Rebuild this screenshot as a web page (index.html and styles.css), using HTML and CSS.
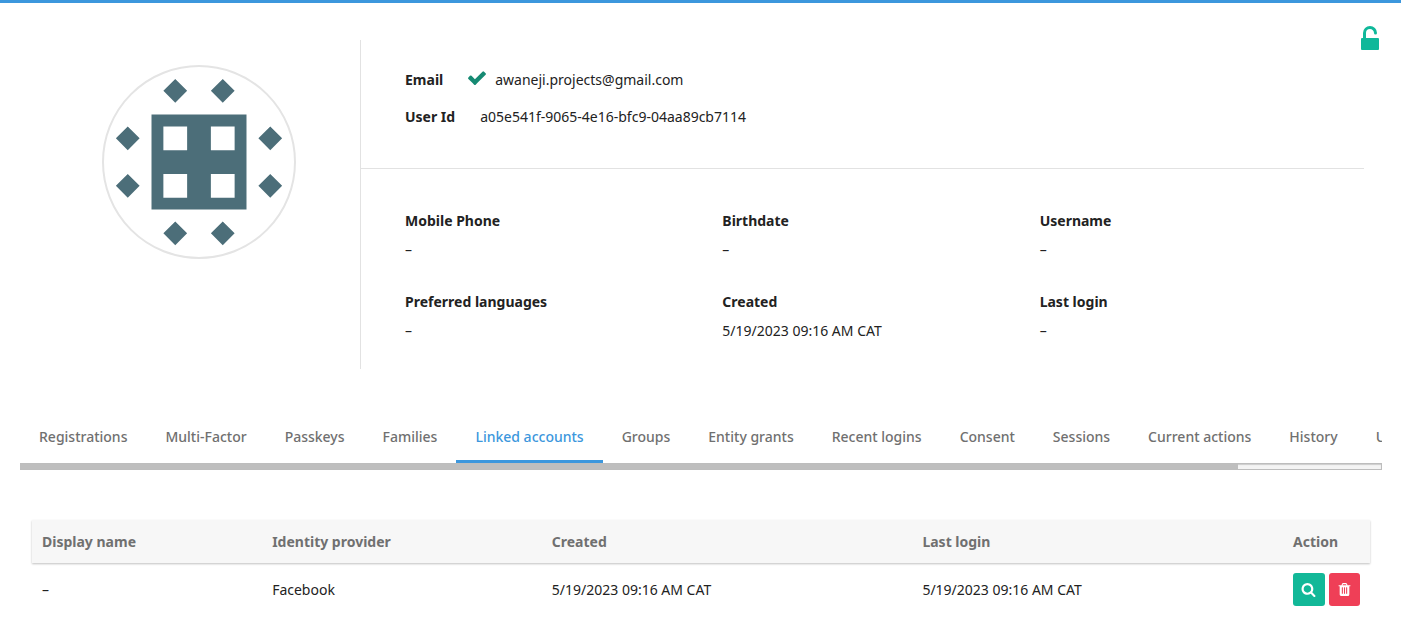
FILE: index.html
```html
<!DOCTYPE html>
<html lang="en">
<head>
<meta charset="utf-8">
<title>Manage user</title>
<link rel="stylesheet" href="styles.css">
</head>
<body>
<main class="panel">
  <svg class="lock" viewBox="0 0 18 24" role="img" aria-label="Unlocked"><rect y="12" width="18" height="12" rx="1"/><path d="M3.500 12.500V7a5.500 5.500 0 0 1 11 0" fill="none" stroke="currentColor" stroke-width="3" stroke-linecap="round"/></svg>
  <section class="profile">
    <div class="avatar-cell">
      <svg class="avatar" viewBox="0 0 8 8" role="img" aria-label="User avatar">
        <path fill-rule="evenodd" d="M2 2h4v4H2zM2.500 2.500v1h1v-1zM4.500 2.500v1h1v-1zM2.500 4.500v1h1v-1zM4.500 4.500v1h1v-1z"/>
        <path d="M3 .5l.5.5-.5.5-.5-.5zM5 .5l.5.5-.5.5-.5-.5zM3 6.500l.5.5-.5.5-.5-.5zM5 6.500l.5.5-.5.5-.5-.5zM1 2.500l.5.5-.5.5-.5-.5zM1 4.500l.5.5-.5.5-.5-.5zM7 2.500l.5.5-.5.5-.5-.5zM7 4.500l.5.5-.5.5-.5-.5z"/>
      </svg>
    </div>
    <div class="info">
      <dl class="identity">
        <div class="identity-row"><dt>Email</dt><dd><svg class="check" viewBox="121 306 1550 1216" aria-hidden="true"><path d="M1671 566q0 40-28 68l-724 724-136 136q-28 28-68 28t-68-28l-136-136-362-362q-28-28-28-68t28-68l136-136q28-28 68-28t68 28l294 295 656-657q28-28 68-28t68 28l136 136q28 28 28 68z"/></svg>awaneji.projects@gmail.com</dd></div>
        <div class="identity-row"><dt>User Id</dt><dd>a05e541f-9065-4e16-bfc9-04aa89cb7114</dd></div>
      </dl>
      <dl class="details">
        <div class="detail"><dt>Mobile Phone</dt><dd>–</dd></div>
        <div class="detail"><dt>Birthdate</dt><dd>–</dd></div>
        <div class="detail"><dt>Username</dt><dd>–</dd></div>
        <div class="detail"><dt>Preferred languages</dt><dd>–</dd></div>
        <div class="detail"><dt>Created</dt><dd>5/19/2023 09:16 AM CAT</dd></div>
        <div class="detail"><dt>Last login</dt><dd>–</dd></div>
      </dl>
    </div>
  </section>

  <div class="tabs-wrap">
    <nav class="tabs">
      <a class="tab" href="#registrations">Registrations</a>
      <a class="tab" href="#multi-factor">Multi-Factor</a>
      <a class="tab" href="#passkeys">Passkeys</a>
      <a class="tab" href="#families">Families</a>
      <a class="tab tab-active" href="#linked-accounts" aria-current="page">Linked accounts</a>
      <a class="tab" href="#groups">Groups</a>
      <a class="tab" href="#entity-grants">Entity grants</a>
      <a class="tab" href="#recent-logins">Recent logins</a>
      <a class="tab" href="#consent">Consent</a>
      <a class="tab" href="#sessions">Sessions</a>
      <a class="tab" href="#current-actions">Current actions</a>
      <a class="tab" href="#history">History</a>
      <a class="tab" href="#user-data">User data</a>
    </nav>
    <div class="scroll-track"><div class="scroll-thumb"></div></div>
  </div>

  <table class="accounts">
    <colgroup><col class="col-name"><col class="col-provider"><col class="col-date"><col class="col-date"><col></colgroup>
    <thead>
      <tr><th>Display name</th><th>Identity provider</th><th>Created</th><th>Last login</th><th>Action</th></tr>
    </thead>
    <tbody>
      <tr>
        <td>–</td><td>Facebook</td><td>5/19/2023 09:16 AM CAT</td><td>5/19/2023 09:16 AM CAT</td>
        <td><div class="actions">
          <button class="btn btn-view" type="button" aria-label="View"><svg viewBox="0 0 1792 1792" aria-hidden="true"><path fill-rule="evenodd" d="M1216 832q0-185-131.500-316.500t-316.500-131.500-316.500 131.500-131.500 316.500 131.500 316.500 316.500 131.500 316.500-131.500 131.500-316.500zm512 832q0 52-38 90t-90 38q-54 0-90-38l-343-342q-179 124-399 124-143 0-273.500-55.500t-225-150-150-225-55.500-273.500 55.500-273.500 150-225 225-150 273.500-55.500 273.500 55.500 225 150 150 225 55.500 273.500q0 220-124 399l343 343q37 37 37 90z"/></svg></button>
          <button class="btn btn-delete" type="button" aria-label="Delete"><svg viewBox="0 0 1792 1792" aria-hidden="true"><path fill-rule="evenodd" d="M704 1376v-704q0-14-9-23t-23-9h-64q-14 0-23 9t-9 23v704q0 14 9 23t23 9h64q14 0 23-9t9-23zm256 0v-704q0-14-9-23t-23-9h-64q-14 0-23 9t-9 23v704q0 14 9 23t23 9h64q14 0 23-9t9-23zm256 0v-704q0-14-9-23t-23-9h-64q-14 0-23 9t-9 23v704q0 14 9 23t23 9h64q14 0 23-9t9-23zm-544-992h448l-48-117q-7-9-17-11h-317q-10 2-17 11zm928 32v64q0 14-9 23t-23 9h-96v948q0 83-47 143.500t-113 60.500h-832q-66 0-113-58.500t-47-141.500v-952h-96q-14 0-23-9t-9-23v-64q0-14 9-23t23-9h309l70-167q15-37 54-63t79-26h320q40 0 79 26t54 63l70 167h309q14 0 23 9t9 23z"/></svg></button>
        </div></td>
      </tr>
    </tbody>
  </table>
</main>
</body>
</html>
```
FILE: styles.css
```css
* { box-sizing: border-box; }

body {
  margin: 0;
  background: #fff;
  color: #222;
  font: 400 14px/21px "Noto Sans", "Open Sans", sans-serif;
}

dl, dd { margin: 0; }
dt { font-weight: 700; }

.panel {
  position: relative;
  border-top: 3px solid #3c97dd;
  padding-top: 37px;
}

.lock {
  position: absolute;
  top: 23px;
  right: 22px;
  width: 18px;
  height: 24px;
  color: #0fb89a;
  fill: currentColor;
}

.profile {
  display: grid;
  grid-template-columns: 323px 1fr;
  padding: 0 37px;
}

.avatar-cell {
  display: flex;
  justify-content: center;
  align-items: flex-start;
  padding-top: 25px;
}

.avatar {
  width: 194px;
  height: 194px;
  border: 2px solid #e4e4e4;
  border-radius: 50%;
  fill: #4c6e79;
}

.info { border-left: 1px solid #e2e2e2; }

.identity {
  display: grid;
  gap: 16px;
  padding: 29px 7px 41px 44px;
  border-bottom: 1px solid #e2e2e2;
}

.identity-row { display: flex; gap: 25px; }
.identity-row dd { display: flex; align-items: center; gap: 9px; }

.check {
  width: 18px;
  height: 14px;
  margin-bottom: 3px;
  fill: #168a73;
}

.details {
  display: grid;
  grid-template-columns: repeat(3, 1fr);
  row-gap: 31px;
  padding: 41px 7px 28px 44px;
}

.detail { display: grid; gap: 8px; }

.tabs-wrap { margin: 39px 19px 0 20px; }

.tabs { display: flex; overflow: hidden; }

.tab {
  flex: none;
  padding: 18px 19px 13px;
  border-bottom: 3px solid transparent;
  color: #707070;
  font-weight: 500;
  text-decoration: none;
  white-space: nowrap;
}

.tab-active { color: #3c97dd; border-color: #3c97dd; }

.scroll-track {
  height: 7px;
  background: #f4f4f4;
  border: 1px solid #bdbdbd;
  border-left: 0;
  box-shadow: inset 0 1px 1px #ccc;
}

.scroll-thumb {
  width: 89.5%;
  height: 100%;
  background: #bebebe;
}

.accounts {
  width: calc(100% - 63px);
  margin: 50px 31px 0 32px;
  border-collapse: collapse;
  table-layout: fixed;
}

.col-name { width: 17.2%; }
.col-provider { width: 20.9%; }
.col-date { width: 27.7%; }

.accounts thead {
  background: #f7f7f7;
  box-shadow: 0 1px 2px rgba(0, 0, 0, 0.25);
}

.accounts th {
  padding: 11px 10px;
  color: #707070;
  font-weight: 700;
  text-align: left;
}

.accounts td { padding: 10px; }

.actions { display: flex; gap: 4px; }

.btn {
  display: flex;
  justify-content: center;
  align-items: center;
  width: 32px;
  height: 33px;
  padding: 0;
  border: 0;
  border-radius: 3px;
  color: #fff;
}

.btn svg { width: 15px; height: 15px; fill: currentColor; }
.btn-view { background: #12b898; }
.btn-delete { background: #ef3f57; }
```
